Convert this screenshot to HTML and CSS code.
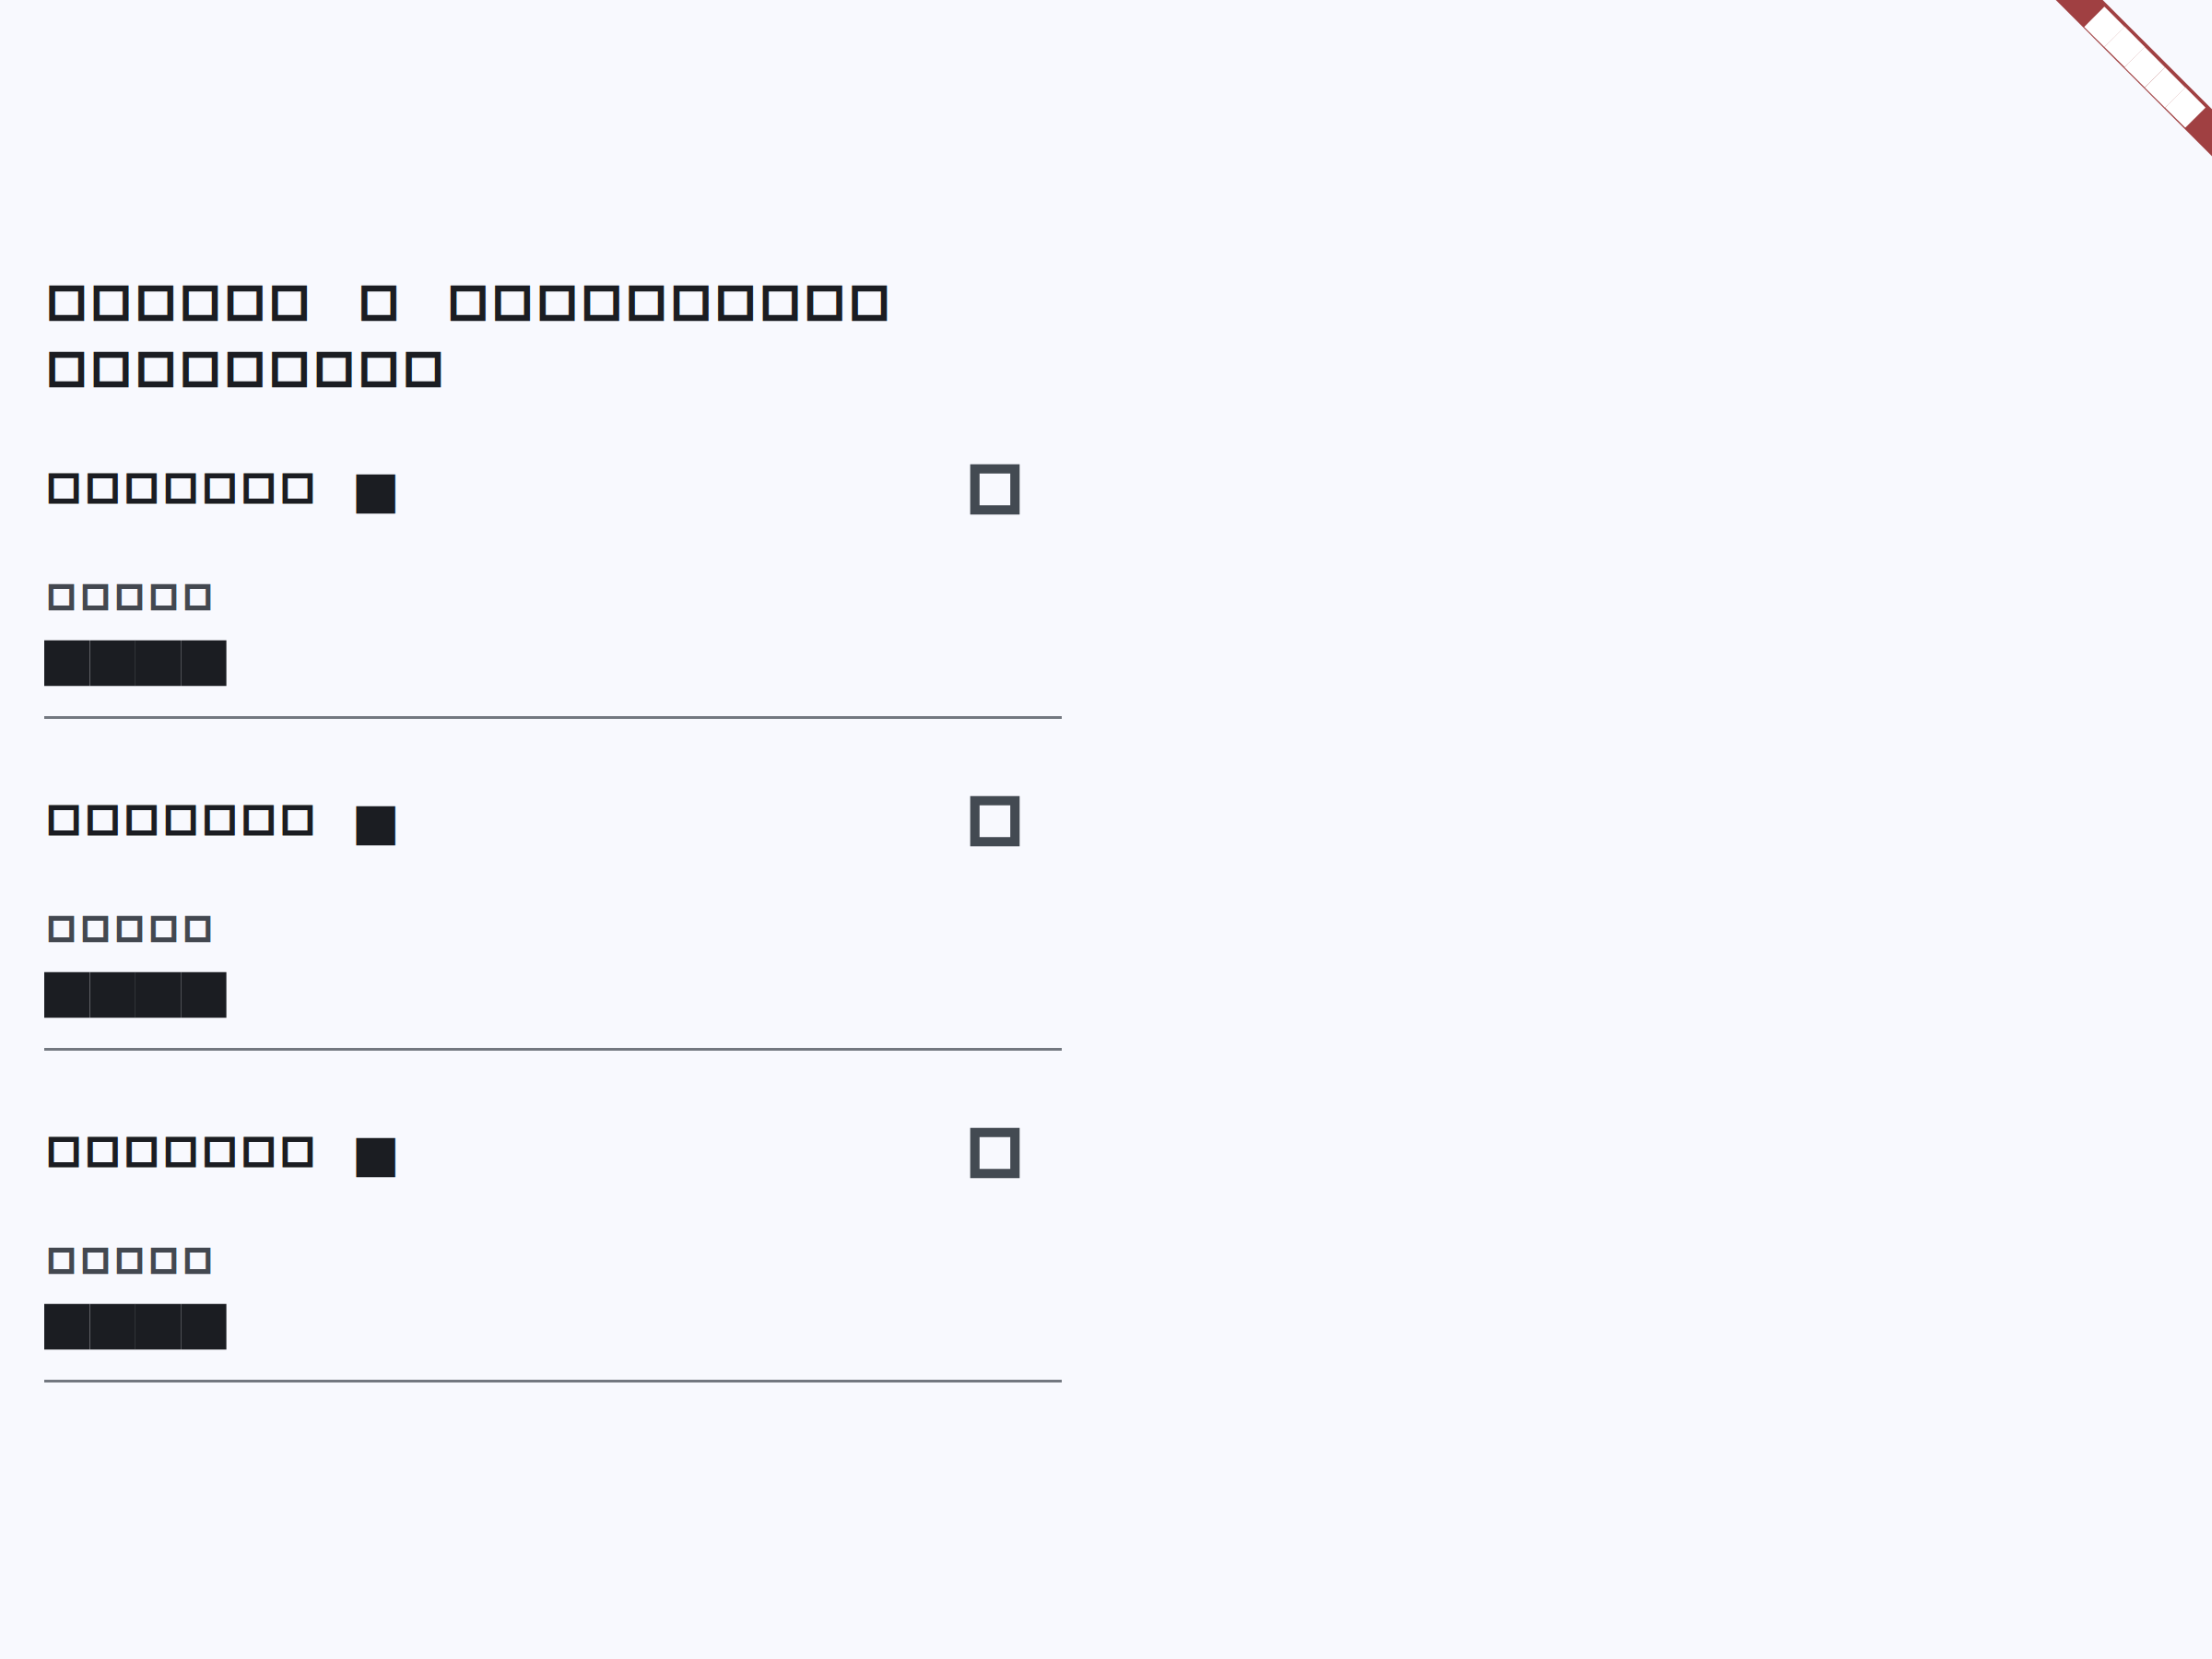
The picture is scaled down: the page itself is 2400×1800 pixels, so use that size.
FILE: index.html
```html
<!DOCTYPE html>
<html>
<head>
<meta charset="utf-8">
<link rel="stylesheet" href="styles.css">
</head>
<body>
<main class="page">
  <h1 class="title">□□□□□□　□　□□□□□□□□□□　□□□□□□□□□</h1>
  <ul class="list">
    <li class="item">
      <div class="head">
        <span class="name"><span class="name-text">□□□□□□□　</span><span class="badge">█</span></span>
        <span class="check">□</span>
      </div>
      <div class="label">□□□□□</div>
      <div class="price">████</div>
    </li>
    <li class="item">
      <div class="head">
        <span class="name"><span class="name-text">□□□□□□□　</span><span class="badge">█</span></span>
        <span class="check">□</span>
      </div>
      <div class="label">□□□□□</div>
      <div class="price">████</div>
    </li>
    <li class="item">
      <div class="head">
        <span class="name"><span class="name-text">□□□□□□□　</span><span class="badge">█</span></span>
        <span class="check">□</span>
      </div>
      <div class="label">□□□□□</div>
      <div class="price">████</div>
    </li>
  </ul>
</main>
<div class="corner">
  <div class="ribbon">█████</div>
</div>
</body>
</html>
```

FILE: styles.css
```css
html, body { margin: 0; padding: 0; }
body {
  background: #f8f9fe;
  color: #1b1d22;
  font-family: "Noto Sans CJK SC", sans-serif;
  font-weight: 700;
  overflow: hidden;
}
.page {
  padding: 291px 48px 0;
}
.title {
  margin: 0;
  width: 1100px;
  padding-left: 3.4px;
  font-size: 41.6px;
  letter-spacing: 6.8px;
  -webkit-text-stroke: 4.6px #1b1d22;
  line-height: 72px;
  font-weight: 700;
  word-break: keep-all;
}
.list {
  list-style: none;
  margin: 0;
  padding: 0;
  width: 1104px;
}
.item {
  padding: 57px 0 23px;
  margin-bottom: 15px;
  border-bottom: 3px solid #737880;
}
.head {
  display: flex;
  align-items: center;
  justify-content: space-between;
  height: 72px;
}
.name {
  display: flex;
  align-items: center;
  line-height: 60px;
  white-space: nowrap;
}
.name-text {
  font-size: 35.8px;
  letter-spacing: 6.5px;
  -webkit-text-stroke: 4.05px #1b1d22;
  margin: 0 -3.25px 0 3.25px;
}
.badge {
  font-size: 42.3px;
  margin-top: 12px;
}
.check {
  font-size: 57.5px;
  line-height: 72px;
  color: #434a52;
  -webkit-text-stroke: 7.6px #434a52;
  margin-right: 43.7px;
}
.label {
  margin-top: 55px;
  padding-left: 3.7px;
  font-size: 29.6px;
  letter-spacing: 7.4px;
  -webkit-text-stroke: 3.8px #434850;
  line-height: 56px;
  color: #434850;
}
.price {
  margin-top: 5px;
  font-size: 49.4px;
  line-height: 74px;
}
.corner {
  position: fixed;
  top: 0;
  right: 0;
  width: 320px;
  height: 320px;
  overflow: hidden;
}
.ribbon {
  position: absolute;
  left: 98px;
  top: 53.5px;
  width: 300px;
  height: 36px;
  background: #a04042;
  color: #ffffff;
  font-size: 31px;
  line-height: 36px;
  text-align: center;
  transform: rotate(45deg);
}
```
